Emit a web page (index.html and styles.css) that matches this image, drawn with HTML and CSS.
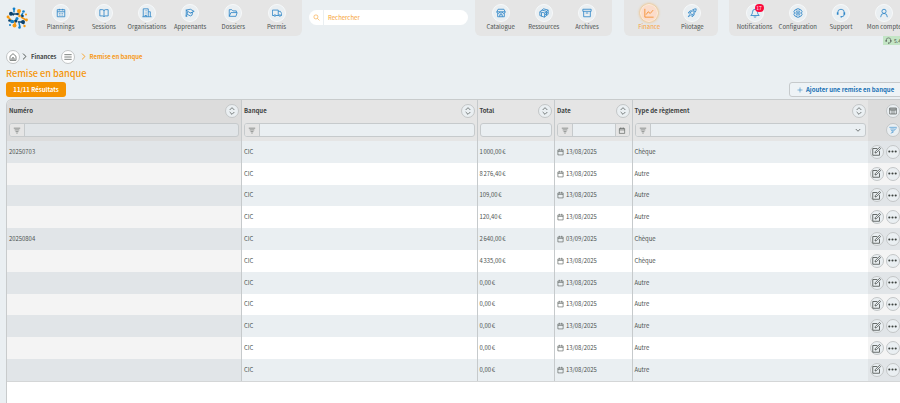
FILE: index.html
```html
<!DOCTYPE html>
<html lang="fr">
<head>
    <meta charset="UTF-8">
    <meta name="viewport" content="width=device-width, initial-scale=1.0">
    <title>Remise en banque</title>
    <link rel="stylesheet" href="styles.css">
</head>
<body>
<svg class="sprite">
    <symbol id="i-calendar" viewBox="0 0 24 24"><path d="M3 4h18v17H3zM3 9h18M8 2v4M16 2v4M7 13h2M11 13h2M15 13h2M7 17h2M11 17h2M15 17h2"/></symbol>
    <symbol id="i-book" viewBox="0 0 24 24"><path d="M2 4h7q3 0 3 3q0-3 3-3h7v15h-7q-3 0-3 2q0-2-3-2H2zM12 7v14"/></symbol>
    <symbol id="i-building" viewBox="0 0 24 24"><path d="M3 21V2h12v19M15 9h5v12M1 21h22M7 6h1M11 6h1M7 10h1M11 10h1M7 14h1M11 14h1M7 21v-3h4v3"/></symbol>
    <symbol id="i-cap" viewBox="0 0 24 24"><path d="M2 5l11-2 9 5-9 4zM6 9l-1 6 8 4 4-2 1-7M13 12l5-2M3 6v10l-1 4h3l-2-4"/></symbol>
    <symbol id="i-folder" viewBox="0 0 24 24"><path d="M3 20V4h6l3 3h8v4M3 20l4-9h15l-3 9z"/></symbol>
    <symbol id="i-truck" viewBox="0 0 24 24"><path d="M5 18H1V5h14v13H9M15 8h5l3 5v5h-2M15 18h2"/><circle cx="7" cy="18" r="2"/><circle cx="19" cy="18" r="2"/></symbol>
    <symbol id="i-search" viewBox="0 0 24 24"><circle cx="10" cy="10" r="7"/><path d="M15 15l7 7"/></symbol>
    <symbol id="i-shop" viewBox="0 0 24 24"><path d="M5 3h14l3 6q0 4-3 4t-4-3q-1 3-3 3t-3-3q-1 3-4 3T2 9zM2 9h20M4 13v8h16v-8M9 21v-5h6v5"/></symbol>
    <symbol id="i-cube" viewBox="0 0 24 24"><path d="M2 9l9-7 11 3-8 7zM2 9v9l11 4 1-10M22 5v10l-9 7M7 5l11 3v9M6 11v9M14 17l8-7"/></symbol>
    <symbol id="i-archive" viewBox="0 0 24 24"><path d="M2 3h20v5H2zM4 8v13h16V8M9 12h6"/></symbol>
    <symbol id="i-chart" viewBox="0 0 24 24"><path d="M2 2v20h21M5 16l5-7 5 4 7-8"/></symbol>
    <symbol id="i-rocket" viewBox="0 0 24 24"><path d="M8 12q4-10 14-10q0 10-10 14zM8 12H3l4-5h4M12 16v5l5-4v-4M7 15l-4 6 6-4"/><circle cx="16" cy="8" r="2"/></symbol>
    <symbol id="i-bell" viewBox="0 0 24 24"><path d="M2 18q4-3 4-8q0-7 6-7t6 7q0 5 4 8zM9 21q3 2 6 0"/></symbol>
    <symbol id="i-gear" viewBox="0 0 24 24"><path d="M9 2h6l1 3 3-1 3 5-2 3 2 3-3 5-3-1-1 3H9l-1-3-3 1-3-5 2-3-2-3 3-5 3 1z"/><circle cx="12" cy="12" r="5"/><circle cx="12" cy="12" r="1.500"/></symbol>
    <symbol id="i-headset" viewBox="0 0 24 24"><path d="M4 11q0-8 8-8t8 8M20 15q0 6-7 6"/><path class="fat" d="M4 10v6M20 10v6M11 21h3"/></symbol>
    <symbol id="i-user" viewBox="0 0 24 24"><circle cx="12" cy="8" r="5"/><path d="M4 22q0-9 8-9t8 9"/></symbol>
    <symbol id="i-home" viewBox="0 0 24 24"><path d="M3 10l9-8 9 8v12H3zM9 22v-7q3-3 6 0v7"/></symbol>
    <symbol id="i-menu" viewBox="0 0 24 24"><path d="M1 5h22M1 12h22M1 19h22"/></symbol>
    <symbol id="i-right" viewBox="0 0 24 24"><path d="M7 2l10 10L7 22"/></symbol>
    <symbol id="i-down" viewBox="0 0 24 24"><path d="M3 8l9 9 9-9"/></symbol>
    <symbol id="i-sort" viewBox="0 0 24 24"><path d="M5 9l7-7 7 7M5 15l7 7 7-7"/></symbol>
    <symbol id="i-filter" viewBox="0 0 24 24"><path d="M1 4h22M4 10h16M7 16h10M10 21h4"/></symbol>
    <symbol id="i-plus" viewBox="0 0 24 24"><path d="M12 2v20M2 12h20"/></symbol>
    <symbol id="i-date" viewBox="0 0 24 24"><path d="M3 5h18v17H3zM3 10h18M8 1v6M16 1v6"/></symbol>
    <symbol id="i-columns" viewBox="0 0 24 24"><path d="M2 3h20v18H2zM2 6h20M2 9h20M9 9v12M15 9v12"/></symbol>
    <symbol id="i-clear" viewBox="0 0 24 24"><path d="M1 4h22M4 9h13M6 14h7M9 19h4M23 6L5 23"/></symbol>
    <symbol id="i-edit" viewBox="0 0 24 24"><path d="M14 4H2v18h18V11M8 16l1-4L20 1l3 3-11 11z"/></symbol>
    <symbol id="i-dots" viewBox="0 0 24 24"><circle cx="3.500" cy="12" r="2.800"/><circle cx="12" cy="12" r="2.800"/><circle cx="20.500" cy="12" r="2.800"/></symbol>
</svg>

<header class="topbar">
    <div class="logo">
        <svg viewBox="0 0 22 22">
            <g stroke-width="1.500">
                <path stroke="#0b426c" d="M5 6.500L8 8M7 7h4M12 15h6M16 15l2 2M4 13l4 2"/>
                <path stroke="#1480c8" d="M8 1.500v4M17 6l-2 3M11 12l-4 3M13 16l1 4"/>
                <path stroke="#f79a10" d="M13 3v5M2 10l3 3M15 10l5 3M9 18v-4"/>
            </g>
            <g fill="#0b426c"><circle cx="5" cy="6.800" r="2"/><circle cx="11.500" cy="7" r="1.300"/><circle cx="17" cy="15" r="2"/><circle cx="3.500" cy="13.500" r="1.300"/><circle cx="16.500" cy="9" r="1.300"/><circle cx="10" cy="14" r="1.500"/></g>
            <g fill="#1480c8"><circle cx="8" cy="1.800" r="1.400"/><circle cx="17.500" cy="4.500" r="1.300"/><circle cx="11" cy="11.500" r="1.500"/><circle cx="6" cy="14.500" r="1.800"/><circle cx="13.500" cy="20.500" r="1.300"/><circle cx="4" cy="18" r="1"/></g>
            <g fill="#f79a10"><circle cx="13" cy="4" r="2"/><circle cx="2" cy="10" r="1.400"/><circle cx="20.500" cy="13" r="1.400"/><circle cx="8.500" cy="18.500" r="2"/><circle cx="13.500" cy="9" r="1.300"/><circle cx="18.500" cy="19" r="1.200"/><circle cx="20" cy="7.500" r="1"/></g>
        </svg>
    </div>
    <nav class="nav-group nav-main">
        <a class="nav-item"><span class="nav-icon"><svg><use href="#i-calendar"/></svg></span>Plannings</a>
        <a class="nav-item"><span class="nav-icon"><svg><use href="#i-book"/></svg></span>Sessions</a>
        <a class="nav-item"><span class="nav-icon"><svg><use href="#i-building"/></svg></span>Organisations</a>
        <a class="nav-item"><span class="nav-icon"><svg><use href="#i-cap"/></svg></span>Apprenants</a>
        <a class="nav-item"><span class="nav-icon"><svg><use href="#i-folder"/></svg></span>Dossiers</a>
        <a class="nav-item"><span class="nav-icon"><svg><use href="#i-truck"/></svg></span>Permis</a>
    </nav>
    <div class="search">
        <span class="search-icon"><svg><use href="#i-search"/></svg></span>
        <span class="search-text">Rechercher</span>
    </div>
    <nav class="nav-group nav-catalog">
        <a class="nav-item"><span class="nav-icon"><svg><use href="#i-shop"/></svg></span>Catalogue</a>
        <a class="nav-item"><span class="nav-icon"><svg><use href="#i-cube"/></svg></span>Ressources</a>
        <a class="nav-item"><span class="nav-icon"><svg><use href="#i-archive"/></svg></span>Archives</a>
    </nav>
    <nav class="nav-group nav-finance">
        <a class="nav-item active"><span class="nav-icon"><svg><use href="#i-chart"/></svg></span>Finance</a>
        <a class="nav-item"><span class="nav-icon"><svg><use href="#i-rocket"/></svg></span>Pilotage</a>
    </nav>
    <nav class="nav-group nav-account">
        <a class="nav-item"><span class="nav-icon"><svg><use href="#i-bell"/></svg><b class="badge">17</b></span>Notifications</a>
        <a class="nav-item"><span class="nav-icon"><svg><use href="#i-gear"/></svg></span>Configuration</a>
        <a class="nav-item"><span class="nav-icon"><svg><use href="#i-headset"/></svg></span>Support</a>
        <a class="nav-item"><span class="nav-icon"><svg><use href="#i-user"/></svg></span>Mon compte</a>
    </nav>
</header>
<div class="version"><svg><use href="#i-headset"/></svg>5.4</div>

<div class="breadcrumb">
    <span class="round"><svg><use href="#i-home"/></svg></span>
    <svg class="chevron"><use href="#i-right"/></svg>
    <b class="crumb">Finances</b>
    <span class="round"><svg><use href="#i-menu"/></svg></span>
    <svg class="chevron current"><use href="#i-right"/></svg>
    <b class="crumb current">Remise en banque</b>
</div>
<h1>Remise en banque</h1>
<div class="actions">
    <span class="results">11/11 Résultats</span>
    <button class="add"><svg><use href="#i-plus"/></svg>Ajouter une remise en banque</button>
</div>

<main class="table">
    <div class="row head">
        <div class="cell fixed">
            <div class="label">Numéro<span class="round"><svg><use href="#i-sort"/></svg></span></div>
            <div class="filter"><span class="addon"><svg><use href="#i-filter"/></svg></span></div>
        </div>
        <div class="cell">
            <div class="label">Banque<span class="round"><svg><use href="#i-sort"/></svg></span></div>
            <div class="filter"><span class="addon"><svg><use href="#i-filter"/></svg></span></div>
        </div>
        <div class="cell">
            <div class="label">Total<span class="round"><svg><use href="#i-sort"/></svg></span></div>
            <div class="filter"></div>
        </div>
        <div class="cell">
            <div class="label">Date<span class="round"><svg><use href="#i-sort"/></svg></span></div>
            <div class="filter"><span class="addon"><svg><use href="#i-filter"/></svg></span><span class="addon end"><svg><use href="#i-date"/></svg></span></div>
        </div>
        <div class="cell">
            <div class="label">Type de règlement<span class="round"><svg><use href="#i-sort"/></svg></span></div>
            <div class="filter"><span class="addon"><svg><use href="#i-filter"/></svg></span><svg class="caret"><use href="#i-down"/></svg></div>
        </div>
        <div class="cell tools">
            <span class="round"><svg><use href="#i-columns"/></svg></span>
            <span class="round blue"><svg><use href="#i-clear"/></svg></span>
        </div>
    </div>
    <div id="rows"></div>
</main>

<script>
    var rows = [
        ['20250703', '1 000,00 €', '13/08/2025', 'Chèque'],
        ['', '8 276,40 €', '13/08/2025', 'Autre'],
        ['', '109,00 €', '13/08/2025', 'Autre'],
        ['', '120,40 €', '13/08/2025', 'Autre'],
        ['20250804', '2 640,00 €', '03/09/2025', 'Chèque'],
        ['', '4 335,00 €', '13/08/2025', 'Chèque'],
        ['', '0,00 €', '13/08/2025', 'Autre'],
        ['', '0,00 €', '13/08/2025', 'Autre'],
        ['', '0,00 €', '13/08/2025', 'Autre'],
        ['', '0,00 €', '13/08/2025', 'Autre'],
        ['', '0,00 €', '13/08/2025', 'Autre']
    ]

    document.querySelector('#rows').innerHTML = rows.map(function (r) {
        return `<div class="row">
            <div class="cell fixed">${r[0]}</div>
            <div class="cell">CIC</div>
            <div class="cell amount">${r[1]}</div>
            <div class="cell"><svg class="date-icon"><use href="#i-date"/></svg>${r[2]}</div>
            <div class="cell">${r[3]}</div>
            <div class="cell tools">
                <span class="round edit"><svg><use href="#i-edit"/></svg></span>
                <span class="round dots"><svg><use href="#i-dots"/></svg></span>
            </div>
        </div>`
    }).join('')
</script>
</body>
</html>
```
FILE: styles.css
```css
* {
    box-sizing: border-box;
}

body {
    margin: 0;
    height: 403px;
    overflow: hidden;
    display: flex;
    flex-direction: column;
    background-color: #eaeff2;
    color: #4c5250;
    font-family: "Noto Sans CJK SC", "Noto Sans", sans-serif;
    font-size: 6px;
    line-height: 8px;
}

svg {
    display: block;
    flex: none;
    width: 8px;
    height: 8px;
    fill: none;
    stroke: currentColor;
    stroke-width: 2;
}

.sprite {
    position: absolute;
    width: 0;
    height: 0;
}

.fat {
    stroke-width: 4;
}

/* top bar */
.topbar {
    display: flex;
    flex: none;
    height: 36px;
    width: 920px;
}

.logo {
    width: 35px;
    padding: 7px 0 0 6px;
}

.logo svg {
    width: 22px;
    height: 22px;
    stroke: none;
}

.nav-group {
    display: flex;
    flex: none;
    padding: 4px 4px 0;
    background-color: #e5e5e5;
    border-radius: 0 0 6px 6px;
}

.nav-main {
    width: 267px;
}

.nav-catalog {
    width: 137px;
    margin-left: 7px;
}

.nav-finance {
    width: 94px;
    margin-left: 11.5px;
}

.nav-account {
    width: 190px;
    margin-left: 11.5px;
}

.nav-item {
    display: flex;
    flex: none;
    flex-direction: column;
    align-items: center;
    gap: 1px;
    width: 43.2px;
    white-space: nowrap;
}

.nav-icon {
    position: relative;
    display: flex;
    align-items: center;
    justify-content: center;
    width: 18px;
    height: 18px;
    border: 1px solid #f7f9fa;
    border-radius: 50%;
    background-color: #eaeff2;
    color: #2e86c8;
}

.nav-icon svg {
    width: 10px;
    height: 10px;
}

.active {
    color: #f9a23b;
}

.active .nav-icon {
    color: #f58a25;
    background-color: #fbdccb;
    border-color: #fbeedd;
    box-shadow: 0 0 3px #f5a742;
}

.badge {
    position: absolute;
    top: -1px;
    right: -1px;
    width: 9px;
    height: 8px;
    border-radius: 4px;
    background-color: #fb0a3c;
    color: #ffffff;
    font-size: 5px;
    font-weight: 400;
    text-align: center;
}

.search {
    display: flex;
    align-items: center;
    width: 159px;
    height: 15px;
    margin: 10px 0 0 7px;
    border-radius: 8px;
    background-color: #ffffff;
    color: #f7a233;
}

.search-icon {
    display: flex;
    align-items: center;
    justify-content: center;
    width: 15px;
    height: 15px;
    border-right: 1px solid #eaeff2;
}

.search-icon svg {
    width: 7px;
    height: 7px;
}

.search-text {
    padding-left: 4px;
}

.version {
    display: flex;
    flex: none;
    align-items: center;
    gap: 2px;
    align-self: flex-end;
    width: 17px;
    height: 9px;
    padding-left: 2px;
    background-color: #c3e5c5;
    font-size: 5px;
    white-space: nowrap;
}

.version svg {
    width: 7px;
    height: 7px;
}

/* page heading */
.breadcrumb {
    display: flex;
    flex: none;
    align-items: center;
    height: 13px;
    margin: 5px 0 0 6px;
    color: #3c423f;
    font-size: 5.9px;
}

.round {
    display: flex;
    flex: none;
    align-items: center;
    justify-content: center;
    width: 14px;
    height: 14px;
    border: 1px solid #c3c6c7;
    border-radius: 50%;
    background-color: #eaeff2;
}

.breadcrumb .round {
    background-color: #ffffff;
}

.round svg {
    width: 8px;
    height: 8px;
}

.chevron {
    width: 7px;
    height: 7px;
    margin: 0 1px;
    stroke-width: 3;
}

.crumb {
    margin: 0 4px 0 2px;
}

.chevron.current {
    margin-left: 5px;
}

.current {
    color: #f79a18;
}

h1 {
    flex: none;
    height: 14px;
    margin: 4px 0 0 6px;
    color: #f59508;
    font-size: 9.2px;
    font-weight: 500;
    line-height: 13px;
}

.actions {
    display: flex;
    flex: none;
    justify-content: space-between;
    width: 903px;
    height: 18px;
    padding: 1px 0 2px 6px;
}

.results {
    width: 60px;
    border-radius: 3px;
    background-color: #f59300;
    color: #ffffff;
    font-weight: 700;
    line-height: 15px;
    text-align: center;
}

.add {
    display: flex;
    align-items: center;
    gap: 3px;
    width: 114px;
    padding: 0 0 0 7px;
    border: 1px solid #c6cacc;
    border-radius: 3px;
    background-color: #eef3f6;
    color: #1670b4;
    font: inherit;
    font-weight: 700;
    white-space: nowrap;
}

.add svg {
    width: 6px;
    height: 6px;
}

/* table */
.table {
    flex: 1;
    width: 900px;
    margin-left: 6px;
    border: 1px solid #c8cbcc;
    border-bottom: 0;
    border-radius: 6px 0 0 0;
    background-color: #ffffff;
    overflow: hidden;
}

.row {
    display: grid;
    grid-template-columns: 235px 235.5px 77.5px 77.5px 235px 38px;
    height: 21.8px;
    font-size: 5.9px;
}

.row:nth-child(odd) {
    background-color: #eaeff2;
}

#rows {
    border-bottom: 1px solid #d4d6d7;
}

.cell {
    display: flex;
    align-items: center;
    padding-left: 2px;
    border-right: 1px solid #c6cacc;
}

.cell:nth-child(5),
.cell:nth-child(6) {
    border-right: 0;
}

.fixed {
    background-color: #f4f4f4;
}

.row:nth-child(odd) .fixed,
.row:nth-child(odd) .tools {
    background-color: #e1e5e8;
}

.amount {
    word-spacing: -0.6px;
}

.date-icon {
    width: 7px;
    height: 8px;
    margin-right: 2px;
}

.tools {
    gap: 2px;
    background-color: #f4f4f4;
}

.edit,
.dots {
    color: #3c423f;
}

.dots svg {
    width: 9px;
    height: 9px;
    fill: currentColor;
    stroke: none;
}

.edit svg {
    width: 9px;
    height: 9px;
}

.row.head {
    height: 41px;
    font-size: 6px;
    background-color: #e5e5e5;
}

.head .cell {
    display: block;
    padding: 4px 2px 0;
}

.row.head .fixed,
.row.head .tools {
    background-color: #dcdcdc;
}

.label {
    display: flex;
    align-items: center;
    justify-content: space-between;
    height: 14px;
    color: #3c423f;
    font-weight: 700;
}

.filter {
    display: flex;
    align-items: center;
    height: 14px;
    margin-top: 5px;
    border: 1px solid #c6cacc;
    border-radius: 3px;
    background-color: #eaeff2;
    overflow: hidden;
}

.fixed .filter {
    background-color: #e1e5e8;
}

.addon {
    display: flex;
    align-items: center;
    justify-content: center;
    width: 15px;
    height: 12px;
    border-right: 1px solid #c6cacc;
    background-color: #e5e5e5;
}

.addon svg {
    width: 8px;
    height: 7px;
}

.addon.end {
    width: 14px;
    margin-left: auto;
    border-right: 0;
    border-left: 1px solid #c6cacc;
}

.caret {
    width: 6px;
    height: 6px;
    margin: 0 4px 0 auto;
    stroke-width: 3;
}

.head .tools {
    padding-left: 18px;
}

.head .tools .round + .round {
    margin-top: 5px;
}

.blue {
    color: #3a90d0;
}
```
